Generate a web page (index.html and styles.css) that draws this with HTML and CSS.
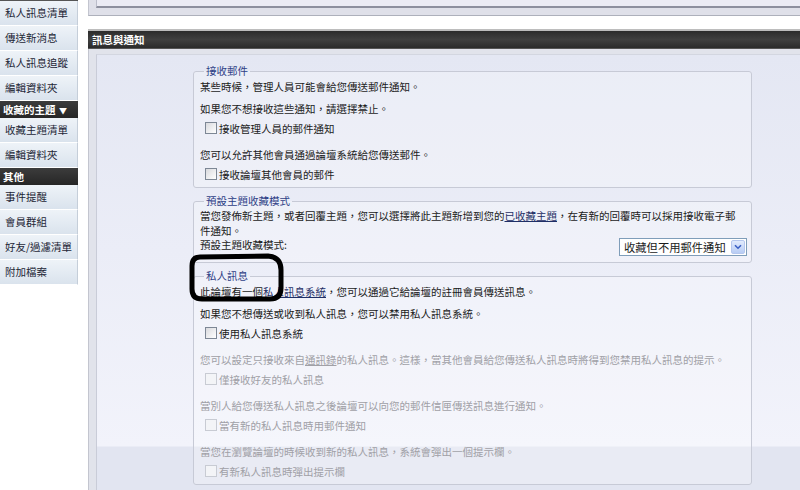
FILE: index.html
```html
<!DOCTYPE html>
<html lang="zh-Hant">
<head>
  <meta charset="UTF-8">
  <title>訊息與通知</title>
  <link rel="stylesheet" href="styles.css">
</head>
<body>
  <div class="sidebar">
    <a class="nav-item" href="#">私人訊息清單</a>
    <a class="nav-item" href="#">傳送新消息</a>
    <a class="nav-item" href="#">私人訊息追蹤</a>
    <a class="nav-item" href="#">編輯資料夾</a>
    <div class="nav-head">收藏的主題 <span class="caret">▼</span></div>
    <a class="nav-item" href="#">收藏主題清單</a>
    <a class="nav-item" href="#">編輯資料夾</a>
    <div class="nav-head">其他</div>
    <a class="nav-item" href="#">事件提醒</a>
    <a class="nav-item" href="#">會員群組</a>
    <a class="nav-item" href="#">好友/過濾清單</a>
    <a class="nav-item" href="#">附加檔案</a>
  </div>

  <div class="main">
    <div class="top-frame"><div class="top-inner"></div></div>

    <div class="section-head">訊息與通知</div>
    <div class="content">
      <div class="content-inner">

        <fieldset class="group">
          <legend>接收郵件</legend>
          <p class="lead">某些時候，管理人員可能會給您傳送郵件通知。</p>
          <p>如果您不想接收這些通知，請選擇禁止。</p>
          <label class="check"><input type="checkbox">接收管理人員的郵件通知</label>
          <p>您可以允許其他會員通過論壇系統給您傳送郵件。</p>
          <label class="check"><input type="checkbox">接收論壇其他會員的郵件</label>
        </fieldset>

        <fieldset class="group tight">
          <legend>預設主題收藏模式</legend>
          <p class="wrap">當您發佈新主題，或者回覆主題，您可以選擇將此主題新增到您的<a href="#">已收藏主題</a>，在有新的回覆時可以採用接收電子郵<br>件通知。</p>
          <div class="mode-row">
            <span>預設主題收藏模式:</span>
            <div class="select">
              <span>收藏但不用郵件通知</span>
              <span class="select-btn">
                <svg width="8" height="6" viewBox="0 0 8 6"><path d="M1 1.2 L4 4.2 L7 1.2" fill="none" stroke="#3a5fc4" stroke-width="1.6"/></svg>
              </span>
            </div>
          </div>
        </fieldset>

        <fieldset class="group">
          <legend>私人訊息</legend>
          <p class="lead">此論壇有一個<a href="#">私人訊息系統</a>，您可以通過它給論壇的註冊會員傳送訊息。</p>
          <p>如果您不想傳送或收到私人訊息，您可以禁用私人訊息系統。</p>
          <label class="check"><input type="checkbox">使用私人訊息系統</label>
          <p class="off">您可以設定只接收來自<a href="#">通訊錄</a>的私人訊息。這樣，當其他會員給您傳送私人訊息時將得到您禁用私人訊息的提示。</p>
          <label class="check off"><input type="checkbox" disabled>僅接收好友的私人訊息</label>
          <p class="off">當別人給您傳送私人訊息之後論壇可以向您的郵件信匣傳送訊息進行通知。</p>
          <label class="check off"><input type="checkbox" disabled>當有新的私人訊息時用郵件通知</label>
          <p class="off">當您在瀏覽論壇的時候收到新的私人訊息，系統會彈出一個提示欄。</p>
          <label class="check off"><input type="checkbox" disabled>有新私人訊息時彈出提示欄</label>
        </fieldset>

      </div>
    </div>
  </div>

  <!-- hand drawn circle around the legend -->
  <svg class="mark" width="105" height="56" viewBox="0 0 105 56">
    <path d="M15 7 L83 6 Q96 7 96 20 L96 38 Q96 49 85 49 L17 49 Q7 49 7 39 L7 16 Q7 7 15 7 Z" fill="none" stroke="#000" stroke-width="5" stroke-linejoin="round"/>
  </svg>
</body>
</html>
```

FILE: styles.css
```css
body {
  margin: 0;
  display: flex;
  height: 490px;
  overflow: hidden;
  background: #fff;
  color: #1b1b1b;
  font-family: "Noto Sans CJK TC", "Noto Sans CJK SC", sans-serif;
  font-size: 10.5px;
}

/* left menu */
.sidebar {
  width: 78px;
  flex: none;
  border-top: 1px solid #555;
}

.nav-item {
  display: block;
  height: 24px;
  line-height: 24px;
  padding-left: 5px;
  border-bottom: 1px solid #fff;
  border-right: 1px solid #c5ced9;
  background: linear-gradient(#eef3f8, #dae3ed);
  color: #1d2636;
  text-decoration: none;
  white-space: nowrap;
}

.nav-head {
  height: 17px;
  line-height: 17px;
  padding-left: 3px;
  background: linear-gradient(#3c3c3c, #262626);
  color: #fff;
  font-weight: bold;
  white-space: nowrap;
}
.nav-head .caret {
  font-size: 8px;
  margin-left: 1px;
}

/* main column */
.main {
  flex: 1;
  min-width: 0;
  margin-left: 10px;
}

.top-frame {
  height: 15px;
  padding-left: 7px;
  border-left: 1px solid #c3c5cf;
  border-bottom: 1px solid #adb0bb;
  background: #dfe0e9;
}
.top-inner {
  height: 6px;
  border-left: 1px solid #bbbdca;
  border-bottom: 2px solid #8d8f9e;
  background: #ebebf4;
}

.section-head {
  margin-top: 13px;
  height: 17px;
  line-height: 17px;
  padding-left: 4px;
  border-top: 2px solid #bdbdbd;
  border-bottom: 1px solid #555;
  background: linear-gradient(#2c2c2c, #404040 50%, #2b2b2b);
  color: #fff;
  font-weight: bold;
}

.content {
  box-sizing: border-box;
  height: 441px;
  padding: 5px 0 0 7px;
  border-left: 1px solid #c3c5cf;
  background: #e1e3eb;
}

.content-inner {
  box-sizing: border-box;
  height: 100%;
  padding: 9px 0 0 96px;
  border-left: 1px solid #c9ccd8;
  border-top: 1px solid #d3d6e0;
  background: linear-gradient(#e4e7f3 0, #f2f3fb 391px, #e2e5f1 392px);
}

/* option groups */
.group {
  box-sizing: border-box;
  width: 559px;
  min-width: 0;
  margin: 0 0 6px;
  padding: 2px 6px 6px;
  border: 1px solid #c7cad6;
  border-radius: 3px;
  background: rgba(255, 255, 255, 0.25);
}
.group.tight {
  padding-top: 0;
}

.group legend {
  margin-left: 4px;
  padding: 0 2px;
  line-height: 14px;
  color: #2f3f86;
}

.group p {
  margin: 0 0 5px;
  line-height: 14px;
}
.group p.lead {
  margin-bottom: 8px;
}
.group p.wrap {
  margin: 0;
  line-height: 15px;
}

.group a {
  color: #1f2f66;
}

.check {
  display: flex;
  align-items: center;
  gap: 2px;
  height: 14px;
  margin: 0 0 13px 5px;
}
.check:last-child {
  margin-bottom: 0;
}

.check input {
  appearance: none;
  width: 12px;
  height: 12px;
  margin: 0;
  border: 1px solid #7d8795;
  background: linear-gradient(135deg, #d9dade, #fff);
}

.off,
.group .off a {
  color: #a0a0a6;
}
.check.off input {
  border-color: #c8cbd3;
  background: #f3f4f7;
}

.mode-row {
  display: flex;
  justify-content: space-between;
  align-items: flex-start;
  line-height: 14px;
  margin-right: -2px;
}

.select {
  box-sizing: border-box;
  display: flex;
  align-items: center;
  width: 128px;
  height: 18px;
  padding-left: 4px;
  border: 1px solid #7f9db9;
  background: #fff;
  font-size: 11.3px;
  white-space: nowrap;
}

.select-btn {
  box-sizing: border-box;
  display: flex;
  align-items: center;
  justify-content: center;
  width: 14px;
  height: 14px;
  margin: 0 1px 0 auto;
  border: 1px solid #b5c7ee;
  border-radius: 2px;
  background: linear-gradient(#e2ebfd, #b8ccf4);
}

/* annotation drawn over the page */
.mark {
  position: absolute;
  left: 185px;
  top: 250px;
}
```
